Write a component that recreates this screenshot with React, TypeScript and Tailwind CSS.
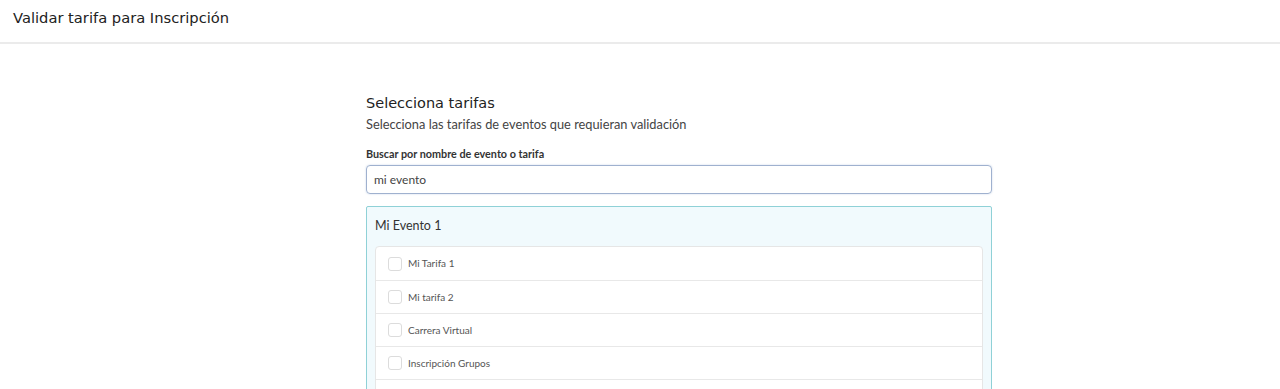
import { useState } from "react";

const tarifas = ["Mi Tarifa 1", "Mi tarifa 2", "Carrera Virtual", "Inscripción Grupos", "Tarifa General"];

const App = () => {
  const [query, setQuery] = useState("mi evento");
  const [checked, setChecked] = useState<Record<number, boolean>>({});

  return (
    <div className="min-h-[389px] bg-white" style={{ fontFamily: "Lato, 'Open Sans', sans-serif" }}>
      {/* Header */}
      <div className="h-[44px] px-[13px] flex items-center border-b-2 border-[#ebebeb]">
        <h1 className="text-[14.7px] text-[#222] -mt-[6px]" style={{ fontFamily: "'DejaVu Sans', sans-serif" }}>
          Validar tarifa para Inscripción
        </h1>
      </div>

      <div className="ml-[366px] w-[626px] pt-[49px]">
        <h2 className="text-[14.5px] leading-[20px] text-[#222]" style={{ fontFamily: "'DejaVu Sans', sans-serif" }}>
          Selecciona tarifas
        </h2>
        <p className="text-[12.8px] leading-[18px] text-[#444] mt-[2px]">Selecciona las tarifas de eventos que requieran validación</p>

        <label className="block text-[10.8px] font-bold text-[#333] mt-[13px] mb-[3px]">Buscar por nombre de evento o tarifa</label>
        <input
          value={query}
          onChange={(e) => setQuery(e.target.value)}
          className="w-full h-[29px] px-[7px] text-[12px] text-[#444] border border-[#9fb1cf] rounded-[4px] outline-none shadow-[0_0_2px_rgba(120,150,200,0.4)]"
        />

        {/* Event card */}
        <div className="mt-[12px] border border-[#8fd1d7] bg-[#f1fafd] rounded-[2px] px-[8px] pb-[8px]">
          <div className="h-[39px] flex items-center text-[12.5px] text-[#333]">Mi Evento 1</div>
          <div className="bg-white border border-[#e6e6e6] rounded-[4px]">
            {tarifas.map((t, i) => (
              <div key={i} className="h-[33px] flex items-center px-[12px] border-t border-[#e8e8e8] first:border-t-0">
                <button
                  onClick={() => setChecked({ ...checked, [i]: !checked[i] })}
                  className="w-[14px] h-[14px] rounded-[3px] border border-[#dcdcdc] bg-white mr-[6px]"
                />
                <span className="text-[10px] text-[#555]">{t}</span>
              </div>
            ))}
          </div>
        </div>
      </div>
    </div>
  );
};

export default App;
